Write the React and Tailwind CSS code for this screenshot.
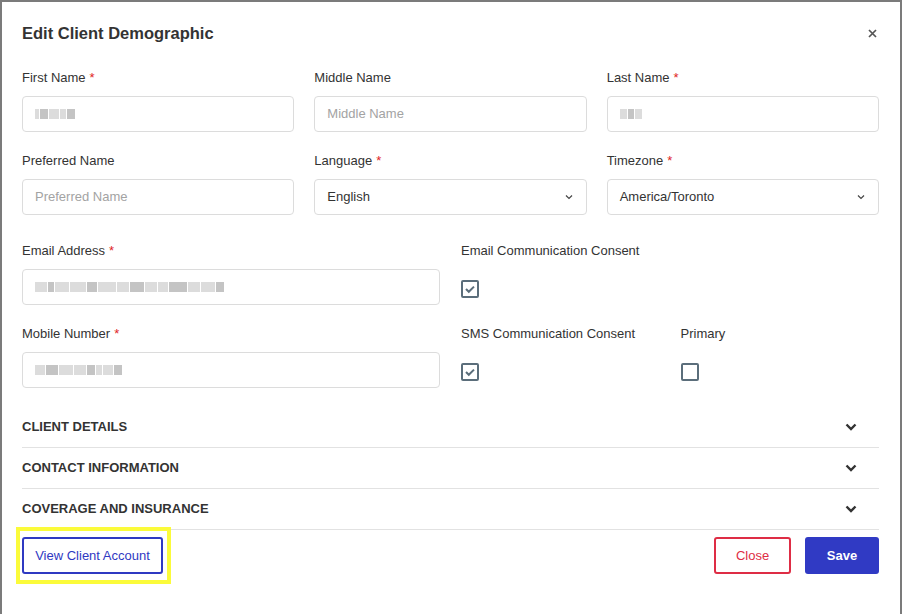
import React from "react";

function Label({ children, required }) {
  return (
    <div className="h-[18px] text-[13px] leading-[18px] text-[#333]">
      {children}
      {required && <span className="ml-[4px] text-[#e02424]">*</span>}
    </div>
  );
}

function Blur({ widths }) {
  // pixelated redacted value
  return (
    <div className="flex h-[12px] items-center gap-[1px]">
      {widths.map((w, i) => (
        <div
          key={i}
          className={i % 3 === 1 ? "h-[10px] bg-[#c4c4c4]" : "h-[10px] bg-[#dcdcdc]"}
          style={{ width: w }}
        />
      ))}
    </div>
  );
}

function TextInput({ placeholder, blur }) {
  return (
    <div className="flex h-[36px] items-center rounded-[4px] border border-[#dcdcdc] bg-white pl-[12px] text-[13px]">
      {blur ? <Blur widths={blur} /> : <span className="text-[#a3a3a3]">{placeholder}</span>}
    </div>
  );
}

function SelectInput({ value }) {
  return (
    <div className="flex h-[36px] items-center justify-between rounded-[4px] border border-[#dcdcdc] bg-white pl-[12px] pr-[12px] text-[13px] text-[#333]">
      <span>{value}</span>
      <svg width="10" height="10" viewBox="0 0 10 10" fill="none">
        <path d="M2 3.5 L5 6.5 L8 3.5" stroke="#444" strokeWidth="1.2" />
      </svg>
    </div>
  );
}

function Checkbox({ checked }) {
  return (
    <div className="flex h-[18px] w-[18px] items-center justify-center rounded-[2px] border-2 border-[#5b6e7b] bg-white">
      {checked && (
        <svg width="12" height="12" viewBox="0 0 12 12" fill="none">
          <path d="M2 6 L4.8 8.8 L10 3.6" stroke="#5b6e7b" strokeWidth="2" />
        </svg>
      )}
    </div>
  );
}

function Section({ title }) {
  return (
    <div className="flex h-[41px] items-center justify-between border-b border-[#e2e2e2]">
      <span className="text-[13px] font-bold text-[#333]">{title}</span>
      <svg className="mr-[22px]" width="12" height="8" viewBox="0 0 12 8" fill="none">
        <path d="M1.5 1.5 L6 6 L10.5 1.5" stroke="#333" strokeWidth="2.4" />
      </svg>
    </div>
  );
}

export default function App() {
  return (
    <div
      className="h-[614px] w-[902px] overflow-hidden bg-[#7b7b7b] pl-[2px] pt-[2px]"
      style={{ fontFamily: '"Liberation Sans", Arial, sans-serif' }}
    >
      <div className="h-[612px] w-[898px] bg-white pl-[20px] pr-[21px] pt-[19px]">
        <div className="flex items-center justify-between">
          <h2 className="text-[16.5px] font-bold leading-[24px] text-[#333]">
            Edit Client Demographic
          </h2>
          <svg className="mr-[2px]" width="9" height="9" viewBox="0 0 9 9" fill="none">
            <path d="M1 1 L8 8 M8 1 L1 8" stroke="#555" strokeWidth="1.7" />
          </svg>
        </div>

        <div className="mt-[24px] grid grid-cols-3 gap-x-[20px]">
          <div>
            <Label required>First Name</Label>
            <div className="mt-[9px]">
              <TextInput blur={[4, 8, 10, 6, 8]} />
            </div>
          </div>
          <div>
            <Label>Middle Name</Label>
            <div className="mt-[9px]">
              <TextInput placeholder="Middle Name" />
            </div>
          </div>
          <div>
            <Label required>Last Name</Label>
            <div className="mt-[9px]">
              <TextInput blur={[7, 6, 7]} />
            </div>
          </div>
        </div>

        <div className="mt-[20px] grid grid-cols-3 gap-x-[20px]">
          <div>
            <Label>Preferred Name</Label>
            <div className="mt-[9px]">
              <TextInput placeholder="Preferred Name" />
            </div>
          </div>
          <div>
            <Label required>Language</Label>
            <div className="mt-[9px]">
              <SelectInput value="English" />
            </div>
          </div>
          <div>
            <Label required>Timezone</Label>
            <div className="mt-[9px]">
              <SelectInput value="America/Toronto" />
            </div>
          </div>
        </div>

        <div className="mt-[27px] grid grid-cols-2 gap-x-[21px]">
          <div>
            <Label required>Email Address</Label>
            <div className="mt-[9px]">
              <TextInput blur={[12, 6, 14, 16, 10, 18, 12, 14, 12, 10, 18, 12, 14, 8]} />
            </div>
          </div>
          <div>
            <Label>Email Communication Consent</Label>
            <div className="mt-[9px] flex h-[36px] items-center pt-[4px]">
              <Checkbox checked />
            </div>
          </div>
        </div>

        <div className="mt-[20px] grid grid-cols-2 gap-x-[21px]">
          <div>
            <Label required>Mobile Number</Label>
            <div className="mt-[9px]">
              <TextInput blur={[10, 12, 14, 12, 8, 6, 10, 8]} />
            </div>
          </div>
          <div className="grid grid-cols-2 gap-x-[21px]">
            <div>
              <Label>SMS Communication Consent</Label>
              <div className="mt-[9px] flex h-[36px] items-center pt-[4px]">
                <Checkbox checked />
              </div>
            </div>
            <div>
              <Label>Primary</Label>
              <div className="mt-[9px] flex h-[36px] items-center pt-[4px]">
                <Checkbox />
              </div>
            </div>
          </div>
        </div>

        <div className="mt-[19px]">
          <Section title="CLIENT DETAILS" />
          <Section title="CONTACT INFORMATION" />
          <Section title="COVERAGE AND INSURANCE" />
        </div>

        <div className="mt-[7px] flex items-center justify-between">
          <div className="relative">
            <button className="h-[37px] w-[141px] rounded-[3px] border-2 border-[#2f39c2] bg-white text-[13px] text-[#2f39c2]">
              View Client Account
            </button>
            <div className="pointer-events-none absolute -bottom-[10px] -left-[6px] -right-[8px] -top-[10px] border-[4px] border-[#fbfb3a]" />
          </div>
          <div className="flex gap-[14px]">
            <button className="h-[37px] w-[77px] rounded-[3px] border-2 border-[#de2d45] bg-white text-[13px] text-[#de2d45]">
              Close
            </button>
            <button className="h-[37px] w-[74px] rounded-[3px] bg-[#303ac4] text-[13px] font-bold text-white">
              Save
            </button>
          </div>
        </div>
      </div>
    </div>
  );
}
